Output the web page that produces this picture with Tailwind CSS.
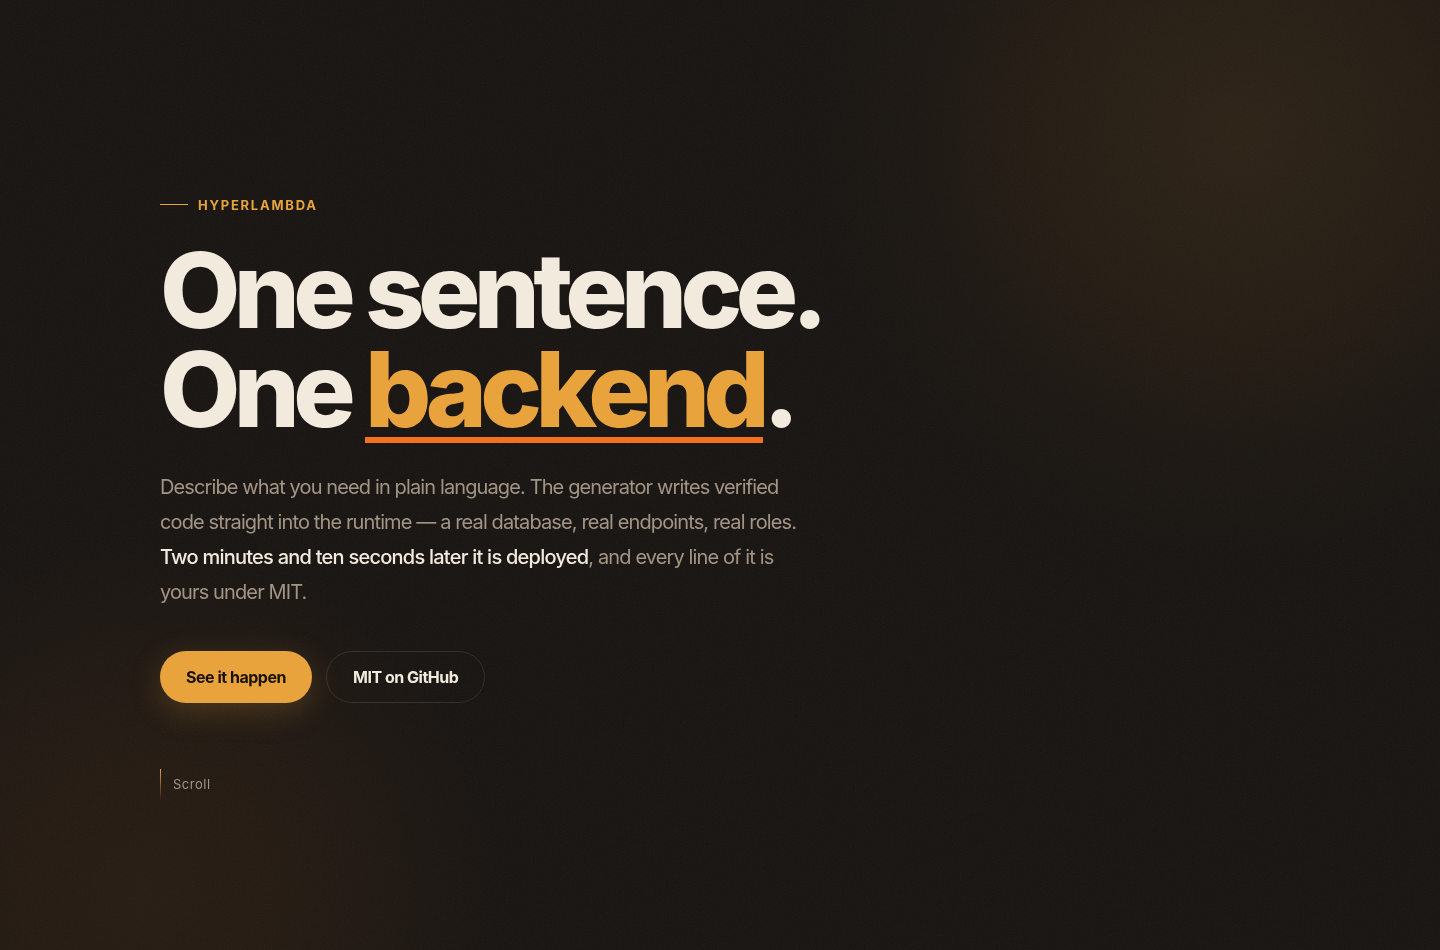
<!DOCTYPE html>
<html lang="en">
<head>
  <meta charset="UTF-8" />
  <meta name="viewport" content="width=device-width, initial-scale=1.0"/>
  <title>Hyperlambda</title>
  <script src="https://cdn.jsdelivr.net/npm/@tailwindcss/browser@4"></script>
</head>
<body class="bg-[#181411] text-[#f2eadd] font-['Inter',sans-serif] antialiased">
  <!-- warm glows -->
  <div class="fixed inset-0 pointer-events-none bg-[radial-gradient(circle_at_86%_14%,rgba(232,163,61,0.1),rgba(232,163,61,0.06)_200px,rgba(232,163,61,0.02)_320px,transparent_430px),radial-gradient(circle_at_10%_94%,rgba(240,130,40,0.07),rgba(240,130,40,0.05)_160px,transparent_360px)]"></div>
  <!-- grain -->
  <svg class="fixed inset-0 w-full h-full pointer-events-none opacity-5" aria-hidden="true">
    <filter id="grain">
      <feTurbulence type="fractalNoise" baseFrequency="0.9" numOctaves="2" stitchTiles="stitch"/>
      <feColorMatrix type="saturate" values="0"/>
    </filter>
    <rect width="100%" height="100%" filter="url(#grain)"/>
  </svg>

  <main class="relative min-h-screen flex flex-col justify-center px-6 pt-[109px] pb-16">
    <div class="w-full max-w-[1120px] mx-auto">
      <p class="flex items-center gap-2.5 mb-[26px] text-[13px] leading-5 font-bold tracking-[0.135em] uppercase text-[#e8a33d]">
        <span class="w-7 h-px bg-[#e8a33d]"></span>
        Hyperlambda
      </p>
      <h1 class="text-[104px] leading-[99px] font-extrabold tracking-[-0.064em]">
        One sentence.<br>
        One <span class="relative inline-block text-[#e8a33d]">backend<span class="absolute inset-x-0 -bottom-1 h-1.5 bg-[#f4721e]"></span></span>.
      </h1>
      <p class="mt-[31px] max-w-[648px] text-[20px] leading-[35px] tracking-[-0.044em] text-[#a39585]">
        Describe what you need in plain language. The generator writes verified code straight into the runtime — a real database, real endpoints, real roles. <strong class="font-medium tracking-[-0.038em] text-[#f2eadd]">Two minutes and ten seconds later it is deployed</strong>, and every line of it is yours under MIT.
      </p>
      <div class="flex flex-wrap gap-3.5 mt-[41px]">
        <a href="#demo" class="flex items-center h-13 px-6.5 rounded-full bg-[#e8a33d] text-[#1a1208] text-base font-bold tracking-[-0.03em] shadow-[0_8px_32px_rgba(232,163,61,0.22)]">See it happen</a>
        <a href="#github" class="flex items-center h-13 px-6.5 rounded-full border border-[#f2eadd]/12 text-base font-bold tracking-[-0.03em]">MIT on GitHub</a>
      </div>
      <a href="#demo" class="flex w-fit items-center gap-3 mt-[66px] text-[13px] tracking-[0.04em] text-[#a39585]">
        <span class="w-px h-8 bg-linear-to-b from-[#e8a33d] to-transparent"></span>
        Scroll
      </a>
    </div>
  </main>
</body>
</html>
